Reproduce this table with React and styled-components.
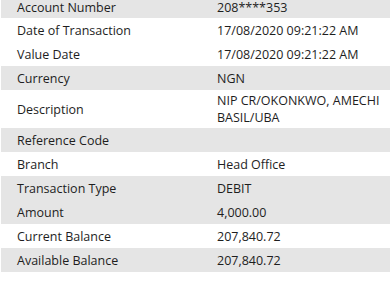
import React from "react";
import styled, { createGlobalStyle } from "styled-components";

const Global = createGlobalStyle`
  html, body { margin: 0; padding: 0; background: #ffffff; }
  body { font-family: "Open Sans", "Noto Sans", Arial, sans-serif; }
`;

const Viewport = styled.div`
  width: 390px;
  height: 281px;
  overflow: hidden;
  background: #ffffff;
`;

const Table = styled.div`
  margin: 0 0 0 1px;
  display: flex;
  flex-direction: column;
`;

const Row = styled.div`
  display: grid;
  grid-template-columns: 200px 1fr;
  align-items: ${(p) => (p.$first ? "start" : "center")};
  min-height: ${(p) => (p.$first ? "18px" : "24px")};
  background: ${(p) => (p.$shaded ? "#e5e5e5" : "#ffffff")};
`;

const Cell = styled.div`
  padding: ${(p) => (p.$first ? "0 0 0 16px" : "2px 0 2px 16px")};
  font-size: 12.5px;
  line-height: ${(p) => (p.$first ? "15px" : "17px")};
  color: #1e1e1e;
`;

const rows = [
  ["Account Number", "208****353", true],
  ["Date of Transaction", "17/08/2020 09:21:22 AM", false],
  ["Value Date", "17/08/2020 09:21:22 AM", false],
  ["Currency", "NGN", true],
  ["Description", "NIP CR/OKONKWO, AMECHI BASIL/UBA", false],
  ["Reference Code", "", true],
  ["Branch", "Head Office", false],
  ["Transaction Type", "DEBIT", true],
  ["Amount", "4,000.00", true],
  ["Current Balance", "207,840.72", false],
  ["Available Balance", "207,840.72", true],
];

export default function App() {
  return (
    <Viewport>
      <Global />
      <Table>
        {rows.map(([label, value, shaded], i) => (
          <Row key={label} $shaded={shaded} $first={i === 0}>
            <Cell $first={i === 0}>{label}</Cell>
            <Cell $first={i === 0}>{value}</Cell>
          </Row>
        ))}
      </Table>
    </Viewport>
  );
}
